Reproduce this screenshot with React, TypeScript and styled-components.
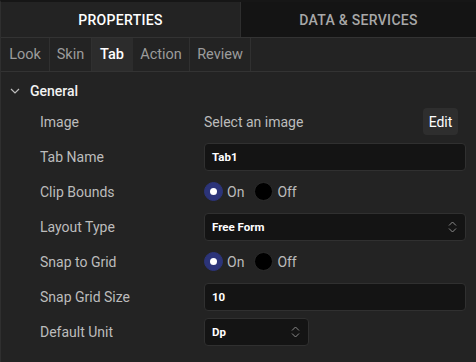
import React from "react";
import styled, { createGlobalStyle } from "styled-components";

const Global = createGlobalStyle`
  html, body { margin: 0; padding: 0; background: #232323; }
  body { font-family: Roboto, "Noto Sans", sans-serif; }
  * { box-sizing: border-box; }
`;

const Panel = styled.div`
  width: 476px;
  height: 362px;
  background: #232323;
  border-top: 2px solid #161616;
  border-left: 1px solid #2f2f2f;
  display: flex;
  flex-direction: column;
  overflow: hidden;
`;

const HeaderBar = styled.div`
  display: flex;
  height: 36px;
  border-bottom: 1px solid #333;
`;

const HeaderTab = styled.div<{ $active?: boolean }>`
  flex: 0 0 ${(p) => (p.$active ? "239px" : "auto")};
  flex-grow: ${(p) => (p.$active ? 0 : 1)};
  display: flex;
  align-items: center;
  justify-content: center;
  background: ${(p) => (p.$active ? "#232323" : "#141414")};
  color: ${(p) => (p.$active ? "#ffffff" : "#a8a8a8")};
  font-size: 14px;
  font-weight: 500;
  letter-spacing: 0.3px;
  border-left: ${(p) => (p.$active ? "none" : "1px solid #2e2e2e")};
`;

const SubTabs = styled.div`
  display: flex;
  height: 34px;
  border-bottom: 1px solid #333;
`;

const SubTab = styled.div<{ $active?: boolean; $w: number }>`
  width: ${(p) => p.$w}px;
  display: flex;
  align-items: center;
  justify-content: center;
  font-size: 14.5px;
  color: ${(p) => (p.$active ? "#ffffff" : "#9c9c9c")};
  background: ${(p) => (p.$active ? "#2c2c2c" : "transparent")};
  font-weight: ${(p) => (p.$active ? 500 : 400)};
  border-right: 1px solid ${(p) => (p.$active ? "#2c2c2c" : "#303030")};
`;

const SectionHead = styled.div`
  display: flex;
  align-items: center;
  gap: 10px;
  height: 32px;
  padding: 5px 0 0 9px;
  color: #f2f2f2;
  font-size: 14px;
  font-weight: 500;
`;

const Rows = styled.div`
  display: flex;
  flex-direction: column;
`;

const Row = styled.div`
  display: grid;
  grid-template-columns: 164px 1fr;
  align-items: center;
  height: 35px;
  padding-left: 39px;
  padding-right: 10px;
`;

const Label = styled.div`
  color: #bcbcbc;
  font-size: 14px;
`;

const ValueCell = styled.div`
  display: flex;
  align-items: center;
  justify-content: space-between;
`;

const PlainValue = styled.span`
  color: #bcbcbc;
  font-size: 14px;
`;

const EditButton = styled.button`
  height: 27px;
  width: 35px;
  margin-right: 8px;
  border: none;
  border-radius: 4px;
  background: #2e2e2e;
  color: #ffffff;
  font-family: Roboto, "Noto Sans", sans-serif;
  font-size: 14px;
  padding: 0;
`;

const Field = styled.div<{ $w?: number }>`
  width: ${(p) => (p.$w ? `${p.$w}px` : "100%")};
  height: 28px;
  background: #141414;
  border: 1px solid #303030;
  border-radius: 4px;
  display: flex;
  align-items: center;
  justify-content: space-between;
  padding: 0 8px 0 7px;
  color: #ffffff;
  font-size: 11.5px;
  font-weight: 700;
`;

const RadioGroup = styled.div`
  display: flex;
  align-items: center;
`;

const RadioDot = styled.span<{ $on?: boolean }>`
  width: 19px;
  height: 19px;
  border-radius: 50%;
  background: ${(p) => (p.$on ? "#2c3479" : "#000000")};
  border: 1px solid ${(p) => (p.$on ? "#2c3479" : "#2a2a2a")};
  display: flex;
  align-items: center;
  justify-content: center;
  &::after {
    content: "";
    display: ${(p) => (p.$on ? "block" : "none")};
    width: 7px;
    height: 7px;
    border-radius: 50%;
    background: #ffffff;
  }
`;

const RadioText = styled.span`
  color: #bcbcbc;
  font-size: 14px;
  margin: 0 10px 0 4px;
`;

const Chevron = () => (
  <svg width="10" height="6" viewBox="0 0 10 6" fill="none">
    <path d="M1 1l4 4 4-4" stroke="#bdbdbd" strokeWidth="1.2" />
  </svg>
);

const UpDown = () => (
  <svg width="9" height="12" viewBox="0 0 9 12" fill="none">
    <path d="M1 4.5L4.5 1 8 4.5M1 7.5L4.5 11 8 7.5" stroke="#8a8a8a" strokeWidth="1" />
  </svg>
);

const Radio = () => (
  <RadioGroup>
    <RadioDot $on />
    <RadioText>On</RadioText>
    <RadioDot />
    <RadioText>Off</RadioText>
  </RadioGroup>
);

const tabs = [
  { name: "Look", w: 49 },
  { name: "Skin", w: 42 },
  { name: "Tab", w: 41, active: true },
  { name: "Action", w: 57 },
  { name: "Review", w: 61 },
];

export default function App() {
  return (
    <>
      <Global />
      <Panel>
        <HeaderBar>
          <HeaderTab $active>PROPERTIES</HeaderTab>
          <HeaderTab>DATA &amp; SERVICES</HeaderTab>
        </HeaderBar>
        <SubTabs>
          {tabs.map((t) => (
            <SubTab key={t.name} $w={t.w} $active={t.active}>
              {t.name}
            </SubTab>
          ))}
        </SubTabs>
        <SectionHead>
          <Chevron />
          General
        </SectionHead>
        <Rows>
          <Row>
            <Label>Image</Label>
            <ValueCell>
              <PlainValue>Select an image</PlainValue>
              <EditButton>Edit</EditButton>
            </ValueCell>
          </Row>
          <Row>
            <Label>Tab Name</Label>
            <Field>Tab1</Field>
          </Row>
          <Row>
            <Label>Clip Bounds</Label>
            <Radio />
          </Row>
          <Row>
            <Label>Layout Type</Label>
            <Field>
              Free Form
              <UpDown />
            </Field>
          </Row>
          <Row>
            <Label>Snap to Grid</Label>
            <Radio />
          </Row>
          <Row>
            <Label>Snap Grid Size</Label>
            <Field>10</Field>
          </Row>
          <Row>
            <Label>Default Unit</Label>
            <Field $w={105}>
              Dp
              <UpDown />
            </Field>
          </Row>
        </Rows>
      </Panel>
    </>
  );
}
